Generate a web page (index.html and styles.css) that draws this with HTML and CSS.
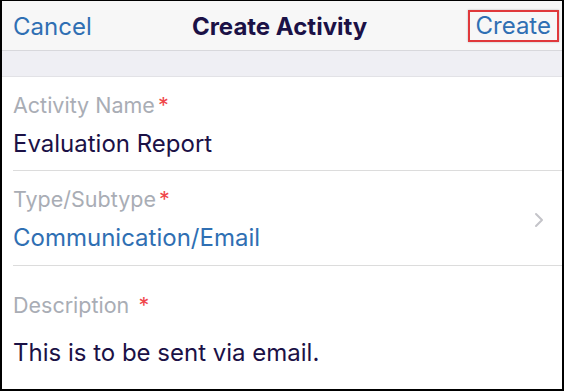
FILE: index.html
```html
<!DOCTYPE html>
<html lang="en">
<head>
  <meta charset="UTF-8" />
  <meta name="viewport" content="width=device-width, initial-scale=1.0"/>
  <title>Create Activity</title>
  <link rel="stylesheet" href="styles.css">
</head>
<body>
  <div class="frame">
    <header class="nav">
      <button class="nav-btn">Cancel</button>
      <h1 class="nav-title">Create Activity</h1>
      <button class="nav-btn nav-create">Create</button>
    </header>
    <div class="band"></div>

    <div class="form">
      <div class="field">
        <div class="label">Activity Name<span class="req">*</span></div>
        <div class="value">Evaluation Report</div>
      </div>
      <div class="field field-link">
        <div>
          <div class="label">Type/Subtype<span class="req">*</span></div>
          <div class="value value-link">Communication/Email</div>
        </div>
        <svg class="chevron" width="10" height="16" viewBox="0 0 10 16">
          <path d="M2 2 L8 8 L2 14" fill="none" stroke="#c4c4c9" stroke-width="2" stroke-linecap="round" stroke-linejoin="round"/>
        </svg>
      </div>
      <div class="field field-desc">
        <div class="label">Description <span class="req">*</span></div>
        <div class="value">This is to be sent via email.</div>
      </div>
    </div>
  </div>
</body>
</html>
```

FILE: styles.css
```css
body {
  margin: 0;
  background: white;
  font-family: Inter, "Noto Sans", sans-serif;
}

.frame {
  width: 560px;
  height: 388px;
  border: 2px solid #000;
  border-top-width: 1px;
  overflow: hidden;
}

.nav {
  height: 47px;
  background: #f7f7f7;
  border-bottom: 1px solid #d8d8dc;
  display: flex;
  align-items: center;
  justify-content: space-between;
  padding: 2px 3px 0 11px;
}

.nav-btn {
  background: none;
  border: none;
  font-family: inherit;
  font-size: 24px;
  line-height: 28px;
  color: #2f6fb3;
  padding: 0;
}

.nav-title {
  margin: 0;
  font-size: 24px;
  line-height: 28px;
  font-weight: 700;
  color: #1b1146;
}

.nav-create {
  border: 2px solid #e0393b;
  padding: 0 6px;
  margin-top: -2px;
  box-shadow: 0 0 2px rgba(0, 0, 0, 0.25);
}

.band {
  height: 25px;
  background: #efeff4;
  border-bottom: 1px solid #e2e2e6;
}

.form {
  padding-left: 11px;
}

.field {
  border-bottom: 1px solid #dcdcdc;
  padding: 16px 0 12px;
}

.field-link {
  display: flex;
  align-items: center;
  justify-content: space-between;
  padding-right: 18px;
  padding-bottom: 13px;
}

.field-desc {
  border-bottom: none;
  padding-top: 27px;
}

.label {
  font-size: 21.5px;
  line-height: 24px;
  color: #a9adb5;
}

.req {
  color: #f0464a;
  margin-left: 3px;
}

.value {
  margin-top: 13px;
  font-size: 24px;
  line-height: 28px;
  color: #1b1146;
}

.field-desc .value {
  margin-top: 22px;
}

.value-link {
  color: #2f6fb3;
}
```
